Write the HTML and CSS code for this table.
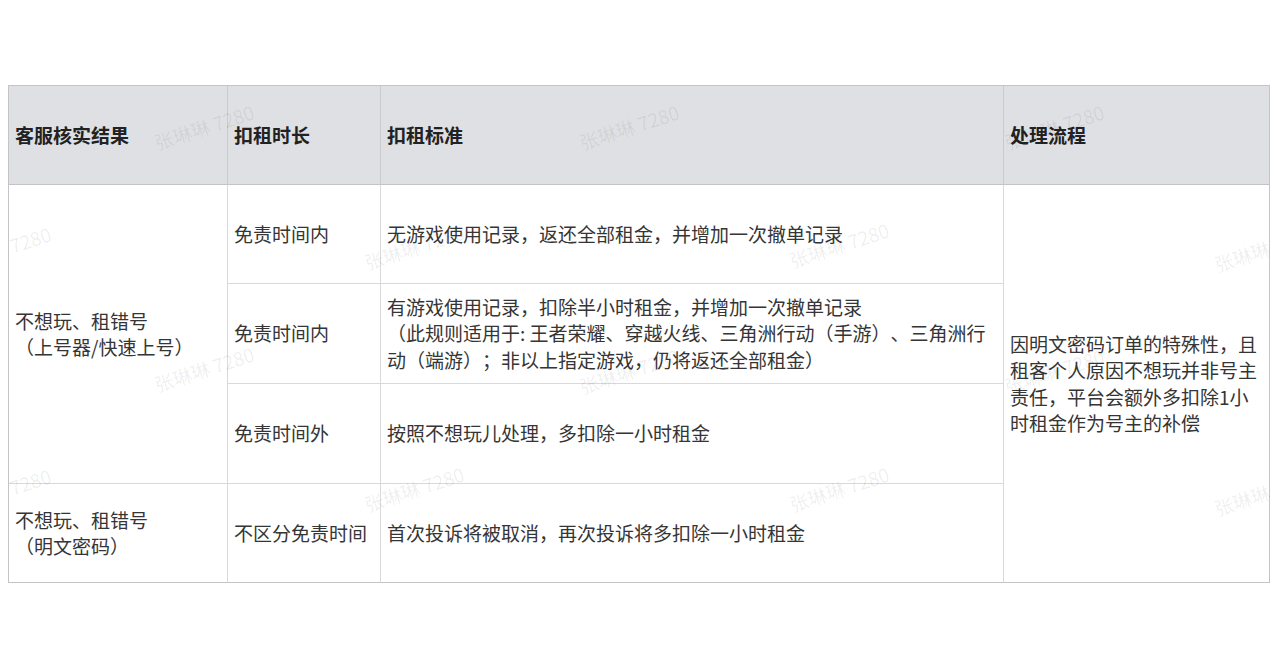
FILE: index.html
```html
<!DOCTYPE html>
<html lang="zh-CN">
<head>
<meta charset="utf-8">
<title>扣租规则</title>
<link rel="stylesheet" href="styles.css">
</head>
<body>
<div class="page">
  <div class="sheet">
    <table class="rules">
      <colgroup>
        <col class="c1"><col class="c2"><col class="c3"><col class="c4">
      </colgroup>
      <thead>
        <tr class="head-row">
          <th>客服核实结果</th>
          <th>扣租时长</th>
          <th>扣租标准</th>
          <th>处理流程</th>
        </tr>
      </thead>
      <tbody>
        <tr class="r99">
          <td rowspan="3">不想玩、租错号<br>（上号器/快速上号）</td>
          <td>免责时间内</td>
          <td>无游戏使用记录，返还全部租金，并增加一次撤单记录</td>
          <td rowspan="4" class="end">因明文密码订单的特殊性，且租客个人原因不想玩并非号主责任，平台会额外多扣除1小时租金作为号主的补偿</td>
        </tr>
        <tr class="r100">
          <td>免责时间内</td>
          <td>有游戏使用记录，扣除半小时租金，并增加一次撤单记录<br>（此规则适用于: 王者荣耀、穿越火线、三角洲行动（手游）、三角洲行动（端游）；非以上指定游戏，仍将返还全部租金）</td>
        </tr>
        <tr class="r100">
          <td>免责时间外</td>
          <td>按照不想玩儿处理，多扣除一小时租金</td>
        </tr>
        <tr class="r99">
          <td>不想玩、租错号<br>（明文密码）</td>
          <td>不区分免责时间</td>
          <td>首次投诉将被取消，再次投诉将多扣除一小时租金</td>
        </tr>
      </tbody>
    </table>
    <div class="watermarks" aria-hidden="true">
      <span class="wm" style="left:147px;top:48px">张琳琳 7280</span>
      <span class="wm" style="left:572px;top:48px">张琳琳 7280</span>
      <span class="wm" style="left:997px;top:48px">张琳琳 7280</span>
      <span class="wm" style="left:-56px;top:170px">张琳琳 7280</span>
      <span class="wm" style="left:357px;top:168px">张琳琳 7280</span>
      <span class="wm" style="left:782px;top:166px">张琳琳 7280</span>
      <span class="wm" style="left:1207px;top:170px">张琳琳 7280</span>
      <span class="wm" style="left:147px;top:290px">张琳琳 7280</span>
      <span class="wm" style="left:572px;top:292px">张琳琳 7280</span>
      <span class="wm" style="left:997px;top:292px">张琳琳 7280</span>
      <span class="wm" style="left:-56px;top:412px">张琳琳 7280</span>
      <span class="wm" style="left:357px;top:410px">张琳琳 7280</span>
      <span class="wm" style="left:782px;top:410px">张琳琳 7280</span>
      <span class="wm" style="left:1207px;top:414px">张琳琳 7280</span>
    </div>
  </div>
</div>
</body>
</html>
```

FILE: styles.css
```css
html, body {
  margin: 0;
  padding: 0;
  background: #ffffff;
}

body {
  font-family: "Noto Sans CJK SC", "Noto Sans", "Liberation Sans", sans-serif;
  color: #333333;
}

.page {
  padding: 85px 10px 0 8px;
}

.sheet {
  position: relative;
  width: 1262px;
  overflow: hidden;
}

.rules {
  width: 1262px;
  table-layout: fixed;
  border-collapse: separate;
  border-spacing: 0;
  border-top: 1px solid #c4c4c4;
  border-left: 1px solid #c4c4c4;
  font-size: 19px;
  line-height: 26.5px;
  text-spacing-trim: space-all;
}

.c1 { width: 219px; }
.c2 { width: 153px; }
.c3 { width: 623px; }
.c4 { width: 266px; }

.rules th,
.rules td {
  box-sizing: border-box;
  border-right: 1px solid #d9d9d9;
  border-bottom: 1px solid #d9d9d9;
  padding: 0 6px;
  text-align: left;
  vertical-align: middle;
}

.head-row {
  height: 99px;
}

.r99 {
  height: 99px;
}

.r100 {
  height: 100px;
}

.rules th {
  background: #dfe0e4;
  color: #222222;
  font-weight: 700;
  border-right-color: #c9cacd;
  border-bottom-color: #c4c4c4;
}

.rules td {
  color: #353535;
}

.rules th:last-child,
.rules td.end {
  border-right-color: #c4c4c4;
}

.rules tbody tr:last-child td,
.rules td.end {
  border-bottom-color: #c4c4c4;
}

.watermarks {
  position: absolute;
  inset: 0;
  pointer-events: none;
}

.wm {
  position: absolute;
  white-space: nowrap;
  font-family: "Noto Sans CJK SC", "Liberation Sans", sans-serif;
  font-size: 19px;
  line-height: 20px;
  color: rgba(0, 0, 0, 0.07);
  transform: rotate(-18deg);
  transform-origin: left center;
}
```
